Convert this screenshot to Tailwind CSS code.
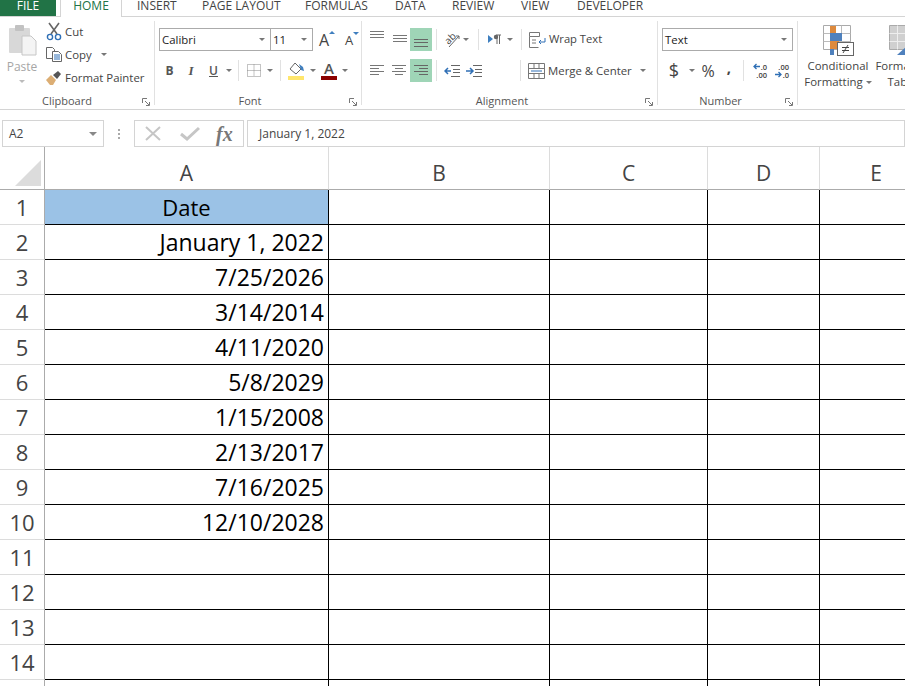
<!DOCTYPE html>
<html lang="en">
<head>
    <meta charset="UTF-8">
    <title>Excel</title>
    <script src="https://cdn.jsdelivr.net/npm/@tailwindcss/browser@4"></script>
</head>
<body class="w-[905px] h-[686px] overflow-hidden bg-white font-['Open_Sans',sans-serif] text-[#444]">

    <!-- tabs -->
    <div class="h-[17px] border-b border-[#d4d4d4] flex text-[12px] leading-[11px] overflow-visible">
        <div class="w-[56px] h-[16px] bg-[#217346] text-white text-center">FILE</div>
        <div class="ml-[4px] w-[62px] h-[17px] bg-white border-x border-[#d4d4d4] text-[#217346] text-center">HOME</div>
        <div class="ml-[15px] w-[65px]">INSERT</div>
        <div class="w-[103px]">PAGE LAYOUT</div>
        <div class="w-[90px]">FORMULAS</div>
        <div class="w-[57px]">DATA</div>
        <div class="w-[69px]">REVIEW</div>
        <div class="w-[56px]">VIEW</div>
        <div>DEVELOPER</div>
    </div>

    <!-- ribbon -->
    <div class="h-[93px] border-b border-[#d4d4d4] flex overflow-hidden text-[11.4px]">

        <!-- clipboard -->
        <div class="w-[155px] h-[84px] mt-[4px] border-r border-[#e1e1e1] relative shrink-0">
            <div class="flex">
                <div class="w-[44px] flex flex-col items-center pt-[4px] text-[#a6a6a6]">
                    <svg width="29" height="31" viewBox="0 0 29 31">
                        <rect x="1" y="3" width="21" height="25" rx="1" fill="#d8d8d8"/>
                        <rect x="7" y="0" width="9" height="6" rx="1" fill="#c2c2c2"/>
                        <path d="M14 11h9l5 5v14H14z" fill="#f4f4f4" stroke="#c6c6c6"/>
                    </svg>
                    <div class="text-[12px] leading-[16px] mt-[3px]">Paste</div>
                    <span class="mt-[5px] border-x-[3px] border-t-[3px] border-x-transparent border-t-[#bbb]"></span>
                </div>
                <div class="ml-[2px] -mt-px flex flex-col">
                    <div class="h-[23px] flex items-center">
                        <svg width="16" height="19" viewBox="0 0 16 19" fill="none">
                            <path d="M3 1l8 11M13 1L5 12" stroke="#666" stroke-width="1.6"/>
                            <circle cx="4" cy="15" r="2.6" stroke="#2f6fb5" stroke-width="1.4"/>
                            <circle cx="12" cy="15" r="2.6" stroke="#2f6fb5" stroke-width="1.4"/>
                        </svg>
                        <span class="ml-[3px]">Cut</span>
                    </div>
                    <div class="h-[23px] flex items-center">
                        <svg width="16" height="15" viewBox="0 0 16 15" fill="none" stroke="#666">
                            <path d="M.5.5h6l2 2v9h-8z" fill="#fff"/>
                            <path d="M6.5 4.5h6l3 3v7h-9z" fill="#fff"/>
                            <path d="M8 8h6M8 10h6M8 12h6" stroke="#2f6fb5"/>
                        </svg>
                        <span class="ml-[3px]">Copy</span>
                        <span class="ml-[9px] border-x-[3px] border-t-[3px] border-x-transparent border-t-[#777]"></span>
                    </div>
                    <div class="h-[23px] flex items-center">
                        <svg width="16" height="15" viewBox="0 0 16 15">
                            <path d="M0 10l5-5 5 5-3 5H4z" fill="#dcae74"/>
                            <path d="M7 5l5-4 3 3-4 5z" fill="#555"/>
                        </svg>
                        <span class="ml-[3px]">Format Painter</span>
                    </div>
                </div>
            </div>
            <div class="absolute bottom-[-3px] left-0 w-[134px] text-center text-[11px] leading-[14px] text-[#555]">Clipboard</div>
            <svg class="absolute right-[4px] bottom-[-1px]" width="8" height="8" viewBox="0 0 8 8" fill="none" stroke="#777"><path d="M.5 5V.5H5M3 3l4 4M4 7.5h3.5V4"/></svg>
        </div>

        <!-- font -->
        <div class="w-[207px] h-[84px] mt-[4px] border-r border-[#e1e1e1] relative shrink-0 pl-[4px]">
            <div class="flex items-center mt-[7px] h-[23px]">
                <div class="w-[112px] h-[23px] border border-[#ababab] flex items-center justify-between pl-[2px] pr-[5px] text-[#222]">Calibri<span class="border-x-[3px] border-t-[3px] border-x-transparent border-t-[#777]"></span></div>
                <div class="w-[43px] h-[23px] -ml-px border border-[#ababab] flex items-center justify-between pl-[2px] pr-[5px] text-[#222]">11<span class="border-x-[3px] border-t-[3px] border-x-transparent border-t-[#777]"></span></div>
                <div class="ml-[6px] w-[15px] h-[23px] relative text-[16px] leading-[25px]">A<span class="absolute left-[10px] top-[3px] border-x-[3px] border-b-[3px] border-x-transparent border-b-[#3f7fbf]"></span></div>
                <div class="ml-[11px] w-[14px] h-[23px] relative text-[13px] leading-[25px]">A<span class="absolute left-[8px] top-[4px] border-x-[3px] border-t-[3px] border-x-transparent border-t-[#3f7fbf]"></span></div>
            </div>
            <div class="flex items-center mt-[8px] h-[23px] text-[#555] text-[12px]">
                <div class="w-[21px] text-center font-bold">B</div>
                <div class="w-[22px] text-center italic font-['Liberation_Serif',serif] font-bold text-[13px]">I</div>
                <div class="w-[23px] text-center underline font-semibold">U</div>
                <span class="ml-[1px] border-x-[3px] border-t-[3px] border-x-transparent border-t-[#777]"></span>
                <div class="ml-[6px] w-px h-[21px] bg-[#e1e1e1]"></div>
                <svg class="ml-[8px]" width="14" height="13" viewBox="0 0 14 13" fill="none" stroke="#888" stroke-dasharray="1 1"><path d="M.5.5h13v12H.5zM7 .5v12M.5 6.5h13"/></svg>
                <span class="ml-[6px] border-x-[3px] border-t-[3px] border-x-transparent border-t-[#777]"></span>
                <div class="ml-[7px] w-px h-[21px] bg-[#e1e1e1]"></div>
                <svg class="ml-[7px]" width="17" height="18" viewBox="0 0 17 18" fill="none">
                    <path d="M7 1l6 6-5 5-6-5z" stroke="#666" fill="#fff"/><path d="M11 2l4 3 1 4-3-1z" fill="#3f7fbf"/>
                    <rect y="14" width="16" height="4" fill="#ffe66d"/>
                </svg>
                <span class="ml-[5px] border-x-[3px] border-t-[3px] border-x-transparent border-t-[#777]"></span>
                <div class="ml-[5px] w-[16px] flex flex-col items-center">
                    <span class="text-[15px] leading-[15px] font-semibold">A</span>
                    <span class="w-[16px] h-[4px] bg-[#8b0000]"></span>
                </div>
                <span class="ml-[5px] border-x-[3px] border-t-[3px] border-x-transparent border-t-[#777]"></span>
            </div>
            <div class="absolute bottom-[-3px] left-0 w-[190px] text-center text-[11px] leading-[14px] text-[#555]">Font</div>
            <svg class="absolute right-[4px] bottom-[-1px]" width="8" height="8" viewBox="0 0 8 8" fill="none" stroke="#777"><path d="M.5 5V.5H5M3 3l4 4M4 7.5h3.5V4"/></svg>
        </div>

        <!-- alignment -->
        <div class="w-[296px] h-[84px] mt-[4px] border-r border-[#e1e1e1] relative shrink-0 pl-[5px]">
            <div class="flex items-center mt-[7px] h-[23px]">
                <svg width="22" height="23" viewBox="0 0 22 23" stroke="#777"><path d="M3 3.500h14M3 6.500h14M3 9.500h14"/></svg>
                <svg width="21" height="23" viewBox="0 0 21 23" stroke="#777"><path d="M4 7.500h14M4 10.500h14M4 13.500h14"/></svg>
                <div class="w-[22px] h-[23px] bg-[#9fd5b7]"><svg width="22" height="23" viewBox="0 0 22 23" stroke="#666"><path d="M4 11.500h14M4 14.500h14M4 18.500h14"/></svg></div>
                <div class="ml-[4px] w-px h-[21px] bg-[#e1e1e1]"></div>
                <div class="ml-[7px] w-[16px] h-[16px] relative">
                    <span class="absolute left-0 top-0 -rotate-45 text-[10px] leading-[12px]">ab</span>
                    <svg class="absolute left-0 top-0" width="16" height="16" viewBox="0 0 16 16" fill="none" stroke="#666"><path d="M5 15L15 4M12 4h3v3"/></svg>
                </div>
                <span class="ml-[3px] border-x-[3px] border-t-[3px] border-x-transparent border-t-[#777]"></span>
                <div class="ml-[9px] w-px h-[21px] bg-[#e1e1e1]"></div>
                <svg class="ml-[9px]" width="13" height="11" viewBox="0 0 13 11"><path d="M0 1l5 4-5 4z" fill="#3f7fbf"/><path d="M8 1h5M9 1v9M11.500 1v9" stroke="#666" fill="none"/><circle cx="8" cy="3" r="2.200" fill="#666"/></svg>
                <span class="ml-[6px] border-x-[3px] border-t-[3px] border-x-transparent border-t-[#777]"></span>
                <div class="ml-[8px] w-px h-[21px] bg-[#e1e1e1]"></div>
                <svg class="ml-[7px]" width="17" height="16" viewBox="0 0 17 16" fill="none" stroke="#777"><path d="M.5.500h10v4H.500zM.5 4.500v11h9M3 8h4M3 11h4"/><path d="M16 6v4H10M12 8l-2 2 2 2" stroke="#2f6fb5"/></svg>
                <span class="ml-[3px] text-[11.2px]">Wrap Text</span>
            </div>
            <div class="flex items-center mt-[8px] h-[23px]">
                <svg width="22" height="23" viewBox="0 0 22 23" stroke="#777"><path d="M3 6.500h14M3 9.500h9M3 12.500h14M3 15.500h9"/></svg>
                <svg width="21" height="23" viewBox="0 0 21 23" stroke="#777"><path d="M3 6.500h14M6 9.500h8M3 12.500h14M6 15.500h8"/></svg>
                <div class="w-[22px] h-[23px] bg-[#9fd5b7]"><svg width="22" height="23" viewBox="0 0 22 23" stroke="#666"><path d="M4 6.500h14M9 9.500h9M4 12.500h14M9 15.500h9"/></svg></div>
                <div class="ml-[4px] w-px h-[21px] bg-[#e1e1e1]"></div>
                <svg class="ml-[7px]" width="16" height="13" viewBox="0 0 16 13" fill="none"><path d="M7 1.500h9M9 5.500h7M9 8.500h7M7 12.500h9" stroke="#666"/><path d="M7 7H1M4 4L1 7l3 3" stroke="#2f6fb5" stroke-width="1.500"/></svg>
                <svg class="ml-[6px]" width="16" height="13" viewBox="0 0 16 13" fill="none"><path d="M7 1.500h9M9 5.500h7M9 8.500h7M7 12.500h9" stroke="#666"/><path d="M0 7h6M4 4l3 3-3 3" stroke="#2f6fb5" stroke-width="1.500"/></svg>
                <div class="ml-[38px] w-px h-[21px] bg-[#e1e1e1]"></div>
                <svg class="ml-[7px]" width="17" height="16" viewBox="0 0 17 16" fill="none" stroke="#777"><path d="M.5.500h16v15H.500zM.5 5.500h16M.5 10.500h16M6 .5v5M11 .5v5M6 10.500v5M11 10.500v5"/><path d="M3 8h11" stroke="#2f6fb5"/></svg>
                <span class="ml-[3px]">Merge &amp; Center</span>
                <span class="ml-[8px] border-x-[3px] border-t-[3px] border-x-transparent border-t-[#777]"></span>
            </div>
            <div class="absolute bottom-[-3px] left-[105px] w-[70px] text-center text-[11px] leading-[14px] text-[#555]">Alignment</div>
            <svg class="absolute right-[4px] bottom-[-1px]" width="8" height="8" viewBox="0 0 8 8" fill="none" stroke="#777"><path d="M.5 5V.5H5M3 3l4 4M4 7.500h3.500V4"/></svg>
        </div>

        <!-- number -->
        <div class="w-[140px] h-[84px] mt-[4px] border-r border-[#e1e1e1] relative shrink-0 pl-[4px]">
            <div class="mt-[7px] w-[131px] h-[23px] border border-[#ababab] flex items-center justify-between pl-[2px] pr-[5px] text-[#222]">Text<span class="border-x-[3px] border-t-[3px] border-x-transparent border-t-[#777]"></span></div>
            <div class="flex items-center mt-[8px] h-[23px]">
                <div class="ml-[6px] w-[12px] text-[18px] text-center">$</div>
                <span class="ml-[9px] border-x-[3px] border-t-[3px] border-x-transparent border-t-[#777]"></span>
                <div class="ml-[4px] w-[18px] text-[16px] text-center">%</div>
                <div class="ml-[7px] w-[10px] h-[23px] text-[15px] font-bold text-center leading-[16px]">,</div>
                <div class="ml-[9px] w-px h-[21px] bg-[#e1e1e1]"></div>
                <div class="ml-[7px] w-[16px] flex flex-col text-[7.500px] leading-[8px] font-semibold items-end">
                    <div class="flex items-center gap-[1px]"><svg width="7" height="7" viewBox="0 0 7 7" fill="none" stroke="#2f6fb5" stroke-width="1.300"><path d="M7 3.500H1M3.500 1L1 3.500 3.500 6"/></svg><span>.0</span></div>
                    <span>.00</span>
                </div>
                <div class="ml-[6px] w-[16px] flex flex-col text-[7.500px] leading-[8px] font-semibold items-end">
                    <span>.00</span>
                    <div class="flex items-center gap-[1px]"><svg width="7" height="7" viewBox="0 0 7 7" fill="none" stroke="#2f6fb5" stroke-width="1.300"><path d="M0 3.500h6M3.500 1L6 3.500 3.500 6"/></svg><span>.0</span></div>
                </div>
            </div>
            <div class="absolute bottom-[-3px] left-0 w-[125px] text-center text-[11px] leading-[14px] text-[#555]">Number</div>
            <svg class="absolute right-[4px] bottom-[-1px]" width="8" height="8" viewBox="0 0 8 8" fill="none" stroke="#777"><path d="M.5 5V.5H5M3 3l4 4M4 7.500h3.500V4"/></svg>
        </div>

        <!-- styles -->
        <div class="flex shrink-0 h-[84px] mt-[4px]">
            <div class="w-[82px] flex flex-col items-center pt-[4px] ml-[-1px]">
                <svg width="32" height="31" viewBox="0 0 32 31" fill="none">
                    <path d="M1.500.5h27v24h-27z" fill="#fff" stroke="#aaa"/>
                    <path d="M1.500 8.500h27M1.500 16.500h27M8.500.5v24M19.500.5v24" stroke="#bbb"/>
                    <rect x="8" y="1" width="6" height="7" fill="#dd8a3d"/>
                    <rect x="8" y="8" width="12" height="8" fill="#4f81bd"/>
                    <rect x="8" y="16" width="9" height="8" fill="#dd8a3d"/>
                    <rect x="8" y="24" width="4" height="6" fill="#4f81bd"/>
                    <rect x="15.500" y="17.500" width="16" height="13" fill="#fff" stroke="#666"/>
                    <path d="M20 22.500h7M20 25.500h7M26 20l-5 8" stroke="#444"/>
                </svg>
                <div class="leading-[16px] mt-[2px] text-center">Conditional</div>
                <div class="leading-[16px] flex items-center">Formatting<span class="ml-[3px] border-x-[3px] border-t-[3px] border-x-transparent border-t-[#777]"></span></div>
            </div>
            <div class="w-[70px] flex flex-col items-center pt-[4px] ml-[-12px] shrink-0">
                <svg class="ml-[6px]" width="32" height="31" viewBox="0 0 32 31" fill="none">
                    <path d="M.5.5h26v24H.500z" fill="#d0d0d0" stroke="#aaa"/>
                    <path d="M.5 8.500h26M.5 16.500h26M8.500.5v24M17.500.5v24" stroke="#eee"/>
                    <path d="M8 30L20 19l5 5-4 6z" fill="#4f81bd"/>
                </svg>
                <div class="leading-[16px] mt-[2px] text-center whitespace-nowrap">Format as</div>
                <div class="leading-[16px]">Table</div>
            </div>
        </div>
    </div>

    <!-- formula bar -->
    <div class="h-[27px] mt-[10px] flex text-[12px]">
        <div class="ml-[2px] w-[102px] border border-[#d4d4d4] flex items-center justify-between pl-[6px] pr-[6px]">A2<span class="border-x-[4px] border-t-[4px] border-x-transparent border-t-[#888]"></span></div>
        <div class="w-[30px] flex flex-col items-center justify-center gap-[2px]">
            <span class="w-[2px] h-[2px] bg-[#aaa]"></span>
            <span class="w-[2px] h-[2px] bg-[#aaa]"></span>
            <span class="w-[2px] h-[2px] bg-[#aaa]"></span>
        </div>
        <div class="w-[110px] border border-[#d4d4d4] flex items-center">
            <svg class="ml-[9px] shrink-0" width="18" height="15" viewBox="0 0 18 15" fill="none" stroke="#c6c6c6" stroke-width="2"><path d="M2 1l14 13M16 1L2 14"/></svg>
            <svg class="ml-[18px] shrink-0" width="20" height="15" viewBox="0 0 20 15" fill="none" stroke="#c6c6c6" stroke-width="3"><path d="M1 8l6 5L19 2"/></svg>
            <span class="ml-[16px] text-[20px] leading-[20px] italic font-bold font-['Liberation_Serif',serif] text-[#777]">fx</span>
        </div>
        <div class="ml-[3px] flex-1 border border-[#d4d4d4] flex items-center pl-[11px]">January 1, 2022</div>
    </div>

    <!-- sheet -->
    <div id="sheet" class="text-[22px] leading-[34px]"></div>

    <script>
    const sheet = document.getElementById('sheet');
    const colWidths = [284, 221, 158, 112, 113];
    const dates = ['January 1, 2022', '7/25/2026', '3/14/2014', '4/11/2020', '5/8/2029', '1/15/2008', '2/13/2017', '7/16/2025', '12/10/2028'];

    let html = `
        <div class="flex h-[43px]">
            <div class="w-[45px] border-r border-b border-[#ababab] relative shrink-0">
                <div class="absolute left-[15px] top-[13px] w-[26px] h-[26px] bg-[#dcdcdc] [clip-path:polygon(100%_0,100%_100%,0_100%)]"></div>
            </div>
            ${['A', 'B', 'C', 'D', 'E'].map((c, i) => `
                <div class="border-r border-b border-r-[#dcdcdc] border-b-[#ababab] text-center leading-[52px] text-[21px] shrink-0 box-border" style="width:${colWidths[i]}px">${c}</div>
            `).join('')}
        </div>`;

    for (let r = 1; r <= 15; r++) {
        const isHead = r === 1;
        const text = isHead ? 'Date' : (dates[r - 2] || '');
        html += `
        <div class="flex h-[35px]">
            <div class="w-[45px] text-center border-r border-r-[#ababab] border-b border-b-[#dcdcdc] shrink-0">${r}</div>
            <div class="border-r border-b border-black text-black shrink-0 ${isHead ? 'bg-[#9bc2e6] text-center' : 'text-right pr-[4px] text-[23px]'}" style="width:${colWidths[0]}px">${text}</div>
            ${colWidths.slice(1).map(w => `<div class="border-r border-b border-black shrink-0" style="width:${w}px"></div>`).join('')}
        </div>`;
    }
    sheet.innerHTML = html;
    </script>
</body>
</html>
